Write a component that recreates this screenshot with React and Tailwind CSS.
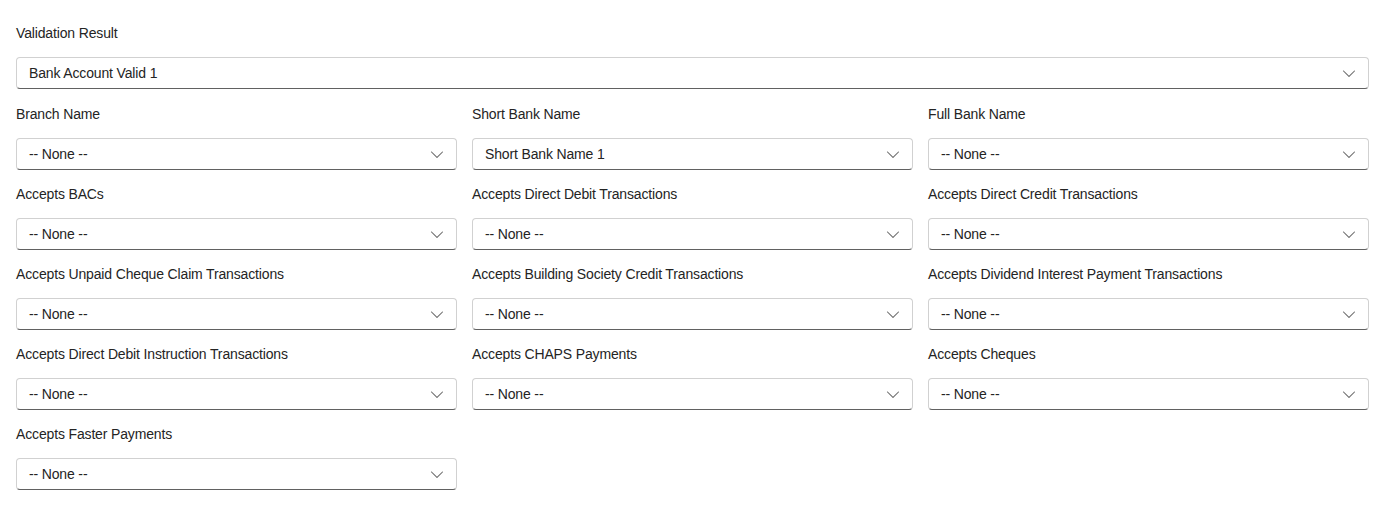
import React from "react";

const Chevron = () => (
  <svg width="20" height="20" viewBox="0 0 20 20" fill="#616161">
    <path d="M15.85 7.65c.2.2.2.5 0 .7l-5.46 5.49a.55.55 0 0 1-.78 0L4.15 8.35a.5.5 0 1 1 .7-.7L10 12.8l5.15-5.16c.2-.2.5-.2.7 0Z" />
  </svg>
);

const Field = ({ label, value = "-- None --" }) => (
  <div className="flex flex-col">
    <div className="h-5 leading-5 text-[14px] tracking-[-0.15px] text-[#242424]">{label}</div>
    <div className="mt-[14px] h-8 flex items-center justify-between rounded-[4px] border border-[#d1d1d1] border-b-[#616161] bg-white pl-3 pr-[9px]">
      <span className="text-[14px] tracking-[-0.15px] text-[#242424]">{value}</span>
      <Chevron />
    </div>
  </div>
);

const fields = [
  ["Branch Name"],
  ["Short Bank Name", "Short Bank Name 1"],
  ["Full Bank Name"],
  ["Accepts BACs"],
  ["Accepts Direct Debit Transactions"],
  ["Accepts Direct Credit Transactions"],
  ["Accepts Unpaid Cheque Claim Transactions"],
  ["Accepts Building Society Credit Transactions"],
  ["Accepts Dividend Interest Payment Transactions"],
  ["Accepts Direct Debit Instruction Transactions"],
  ["Accepts CHAPS Payments"],
  ["Accepts Cheques"],
  ["Accepts Faster Payments"],
];

export default function App() {
  return (
    <div
      className="w-[1381px] h-[506px] bg-white pt-[23px] pl-4 pr-3"
      style={{ fontFamily: '"Segoe UI", "Liberation Sans", Arial, sans-serif' }}
    >
      <Field label="Validation Result" value="Bank Account Valid 1" />
      <div className="mt-[15px] grid grid-cols-3 gap-x-[15px] gap-y-[14px]">
        {fields.map(([l, v]) => (
          <Field key={l} label={l} value={v} />
        ))}
      </div>
    </div>
  );
}
